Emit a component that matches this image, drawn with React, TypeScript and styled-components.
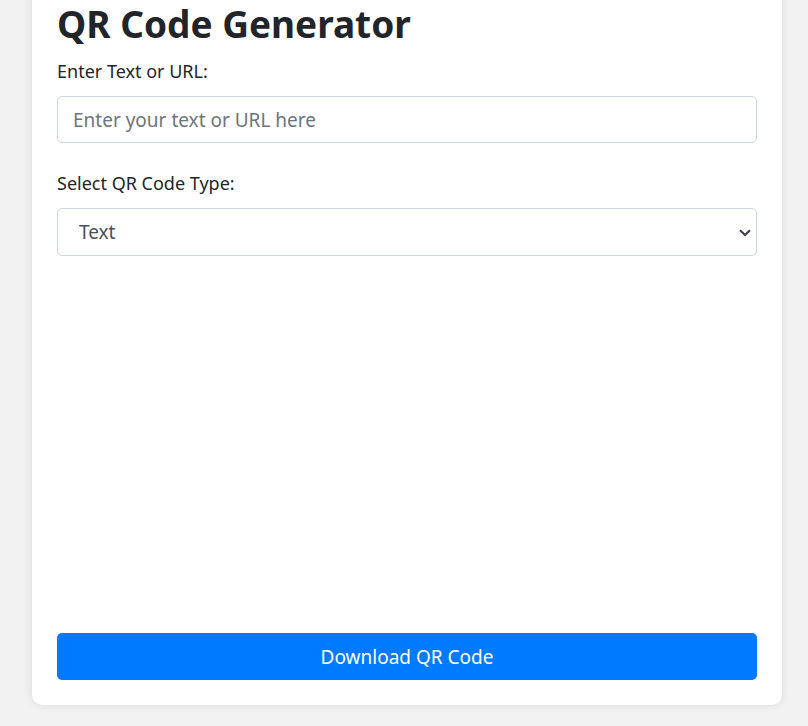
import React, { useState } from "react";
import styled, { createGlobalStyle } from "styled-components";

const GlobalStyle = createGlobalStyle`
  * {
    box-sizing: border-box;
  }
  body {
    margin: 0;
    background: #f2f2f2;
    font-family: "Noto Sans", "Open Sans", sans-serif;
    color: #212529;
  }
`;

const Page = styled.div`
  padding: 0 26px 21px 32px;
`;

const Card = styled.div`
  margin-top: -25px;
  background: #fff;
  border-radius: 10px;
  box-shadow: 0 0 10px rgba(0, 0, 0, 0.1);
  padding: 25px;
  display: flex;
  flex-direction: column;
`;

const Title = styled.h1`
  margin: 0 0 8px;
  font-size: 37px;
  font-weight: 700;
  line-height: 48px;
  color: #212529;
`;

const Field = styled.div<{ $gap: number }>`
  display: flex;
  flex-direction: column;
  margin-bottom: ${(p) => p.$gap}px;
`;

const Label = styled.label`
  font-size: 18px;
  line-height: 27px;
  padding-top: 2px;
  margin-bottom: 11px;
`;

const TextInput = styled.input`
  height: 47px;
  padding: 0 15px;
  font-size: 19px;
  font-family: inherit;
  color: #495057;
  border: 1px solid #ced4da;
  border-radius: 5px;
  outline: none;
  &::placeholder {
    color: #6c757d;
  }
`;

const SelectWrap = styled.div`
  position: relative;
  display: flex;
  flex-direction: column;
`;

const Select = styled.select`
  appearance: none;
  height: 48px;
  padding: 0 40px 0 21px;
  font-size: 19px;
  font-family: inherit;
  color: #495057;
  background: #fff;
  border: 1px solid #ced4da;
  border-radius: 5px;
  outline: none;
`;

const Chevron = styled.svg`
  position: absolute;
  right: 6px;
  top: 21px;
  pointer-events: none;
`;

const QrArea = styled.div`
  height: 361px;
`;

const DownloadButton = styled.button`
  height: 47px;
  border: none;
  border-radius: 5px;
  background: #007bff;
  color: #fff;
  font-size: 19px;
  font-family: inherit;
  cursor: pointer;
`;

export default function App() {
  const [text, setText] = useState("");
  const [type, setType] = useState("text");

  return (
    <>
      <GlobalStyle />
      <Page>
        <Card>
          <Title>QR Code Generator</Title>
          <Field $gap={25}>
            <Label htmlFor="qr-text">Enter Text or URL:</Label>
            <TextInput
              id="qr-text"
              placeholder="Enter your text or URL here"
              value={text}
              onChange={(e) => setText(e.target.value)}
            />
          </Field>
          <Field $gap={16}>
            <Label htmlFor="qr-type">Select QR Code Type:</Label>
            <SelectWrap>
              <Select
                id="qr-type"
                value={type}
                onChange={(e) => setType(e.target.value)}
              >
                <option value="text">Text</option>
                <option value="url">URL</option>
                <option value="email">Email</option>
                <option value="phone">Phone</option>
              </Select>
              <Chevron width="12" height="8" viewBox="0 0 12 8">
                <path
                  d="M1 1.2 L6 6 L11 1.2"
                  fill="none"
                  stroke="#3d4248"
                  strokeWidth="2.2"
                />
              </Chevron>
            </SelectWrap>
          </Field>
          <QrArea />
          <DownloadButton>Download QR Code</DownloadButton>
        </Card>
      </Page>
    </>
  );
}
